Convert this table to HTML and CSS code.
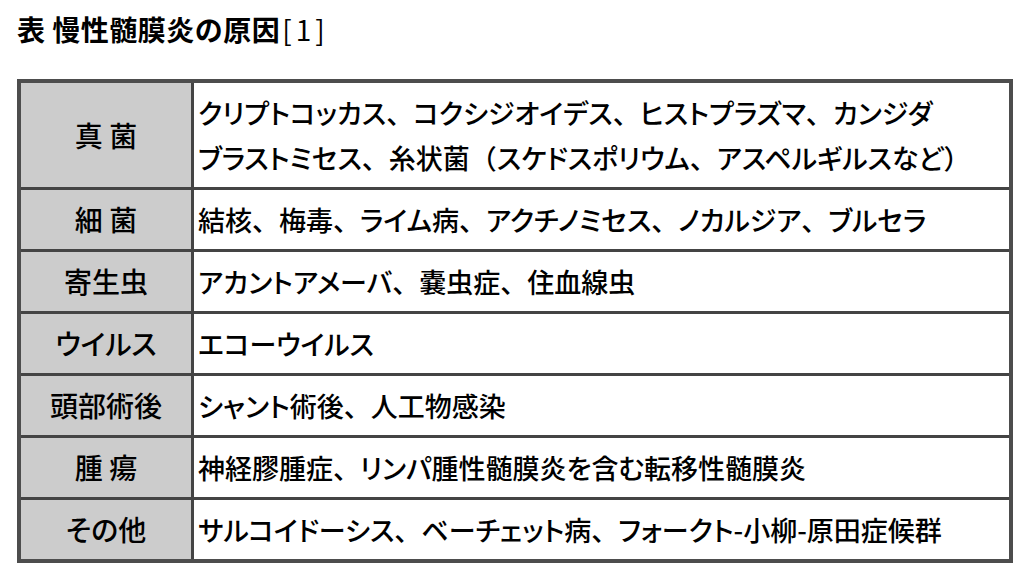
FILE: index.html
```html
<!DOCTYPE html>
<html lang="ja">
<head>
<meta charset="utf-8">
<link rel="stylesheet" href="styles.css">
</head>
<body>
<h1 class="title">表 慢性髄膜炎の原因<span class="ref">[1]</span></h1>
<table class="causes">
  <tr><th>真 菌</th><td>クリプトコッカス<span class="c">、</span>コクシジオイデス<span class="c">、</span>ヒストプラズマ<span class="c">、</span>カンジダ<br>ブラストミセス<span class="c">、</span>糸状菌<span class="c">（</span>スケドスポリウム<span class="c">、</span>アスペルギルスなど<span class="c">）</span></td></tr>
  <tr><th>細 菌</th><td>結核<span class="c">、</span>梅毒<span class="c">、</span>ライム病<span class="c">、</span>アクチノミセス<span class="c">、</span>ノカルジア<span class="c">、</span>ブルセラ</td></tr>
  <tr><th>寄生虫</th><td>アカントアメーバ<span class="c">、</span>嚢虫症<span class="c">、</span>住血線虫</td></tr>
  <tr><th>ウイルス</th><td>エコーウイルス</td></tr>
  <tr><th>頭部術後</th><td>シャント術後<span class="c">、</span>人工物感染</td></tr>
  <tr><th>腫 瘍</th><td>神経膠腫症<span class="c">、</span>リンパ腫性髄膜炎を含む転移性髄膜炎</td></tr>
  <tr><th>その他</th><td>サルコイドーシス<span class="c">、</span>ベーチェット病<span class="c">、</span>フォークト-小柳-原田症候群</td></tr>
</table>
</body>
</html>
```

FILE: styles.css
```css
html, body {
  margin: 0;
  background: #ffffff;
}
body {
  padding: 13px 11px 0 17px;
  font-family: "Noto Sans CJK JP", "Noto Sans", sans-serif;
  color: #000000;
}
.title {
  margin: 0;
  font-size: 28px;
  font-weight: bold;
  line-height: 32px;
  letter-spacing: 0.5px;
}
.ref {
  font-weight: normal;
  letter-spacing: 4px;
  margin-left: 2px;
}
.causes {
  margin-top: 34px;
  width: 996px;
  border-collapse: collapse;
  border: 4px solid #4d4d4d;
  box-shadow: 0 2px 0 #e4e4e4;
  font-size: 27px;
  font-weight: 500;
  line-height: 45px;
  font-feature-settings: "palt";
}
.causes th, .causes td {
  border: 3px solid #444444;
  padding: 7px 6px;
  text-align: left;
  vertical-align: middle;
  white-space: nowrap;
}
.causes th {
  width: 158px;
  background: #cccccc;
  font-weight: 500;
  font-size: 28px;
  text-align: center;
}
.causes td {
  background: #ffffff;
  padding-left: 4px;
}
.c {
  font-feature-settings: normal;
}
```
